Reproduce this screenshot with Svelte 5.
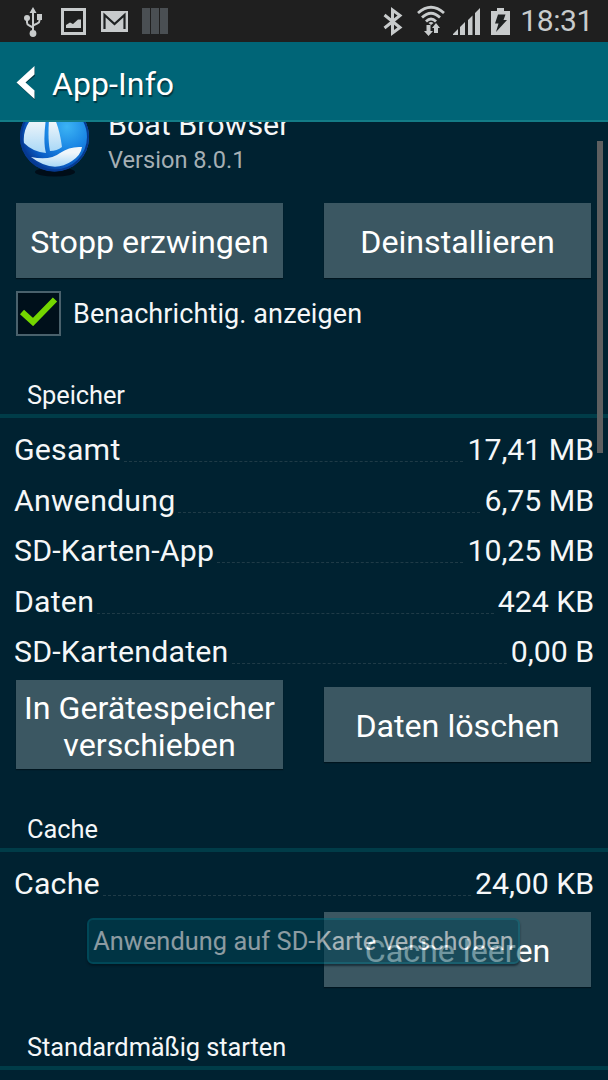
<script lang="ts">
	type Entry = { label: string; value: string };

	const storage: Entry[] = [
		{ label: 'Gesamt', value: '17,41 MB' },
		{ label: 'Anwendung', value: '6,75 MB' },
		{ label: 'SD-Karten-App', value: '10,25 MB' },
		{ label: 'Daten', value: '424 KB' },
		{ label: 'SD-Kartendaten', value: '0,00 B' }
	];
	const cache: Entry[] = [{ label: 'Cache', value: '24,00 KB' }];

	let notify = $state(true);
</script>

{#snippet rows(entries: Entry[])}
	<dl class="rows">
		{#each entries as entry}
			<div class="row">
				<dt>{entry.label}</dt>
				<span class="leader"></span>
				<dd>{entry.value}</dd>
			</div>
		{/each}
	</dl>
{/snippet}

<div class="phone">
	<div class="status">
		<div class="group left">
			<svg class="usb" width="20" height="31" viewBox="0 0 20 31">
				<path
					d="M10 6v19M4 13v3.5q0 2 2 2.8l4 2.2M16.5 11v3.5q0 2-2 2.8L10 19.5"
					fill="none"
					stroke="#c8cbcc"
					stroke-width="2"
				/>
				<path d="M10 1 13.500 7h-7zM14 8h5v6h-5z" fill="#c8cbcc" />
				<circle cx="4" cy="12" r="3" fill="#c8cbcc" />
				<circle cx="10" cy="27.5" r="3.4" fill="#c8cbcc" />
			</svg>
			<svg class="picture" width="25" height="27" viewBox="0 0 25 27">
				<path d="M1.5 1.5h22v24h-22z" fill="none" stroke="#c8cbcc" stroke-width="3" />
				<path d="M5 20v-3l4-2.5 3 1.5 5-4.500 3 0V20z" fill="#c8cbcc" />
			</svg>
			<svg class="mail" width="27" height="21" viewBox="0 0 27 21">
				<path d="M0 0h27v21H0z" fill="#c8cbcc" />
				<path d="M3.5 18V4l10 9 10-9v14" fill="none" stroke="#1e2122" stroke-width="2.2" />
			</svg>
			<svg width="26" height="26" viewBox="0 0 26 26">
				<path d="M0 0h8v26H0zM9 0h8v26H9zM18 0h8v26h-8z" fill="#4a4f53" />
			</svg>
		</div>
		<div class="group right">
			<svg class="bluetooth" width="20" height="29" viewBox="0 0 20 29">
				<path
					d="M1.500 8 17 20.500 9.500 26V3l7.500 5.500L1.500 21"
					fill="none"
					stroke="#c8cbcc"
					stroke-width="3"
				/>
			</svg>
			<svg class="wifi" width="28" height="31" viewBox="0 0 28 31">
				<g fill="none" stroke="#c8cbcc" stroke-width="2.8">
					<path d="M1 8Q14-3.500 27 8" />
					<path d="M5 12.500Q14 4 23 12.500" />
					<path d="M9 16.500Q14 11.500 19 16.500" />
				</g>
				<path d="M11.500 18q2.500-2 5 0l-2.500 2z" fill="#c8cbcc" />
				<path d="M9.500 20h4v6h2.500l-4.500 5L7 26h2.500zM17 28v-5h-2l4-5 4 5h-2v5z" fill="#c8cbcc" />
			</svg>
			<svg class="signal" width="27" height="27" viewBox="0 0 27 27">
				<path
					d="M0 27v-1l5-5v6zM7 27v-8l5-5v13zM15 27V12l4.500-4.500V27zM22 27V5l5-5v27z"
					fill="#c8cbcc"
				/>
			</svg>
			<svg class="battery" width="19" height="27" viewBox="0 0 19 27">
				<path d="M0 3h6V0h7v3h6v24H0z" fill="#c8cbcc" />
				<path d="M7 6.500h7.500L12.500 12H16L5 24l2.500-8.500H4z" fill="#1e2122" />
			</svg>
			<span class="clock">18:31</span>
		</div>
	</div>

	<header>
		<svg width="20" height="34" viewBox="0 0 20 34">
			<path d="M19 1v9l-9.500 7.500L19 26v8L1 17.500z" fill="#003642" />
			<path d="M18.500 0v8.500L9.500 16.500l9 8V33L.5 16.500z" fill="#fff" />
		</svg>
		<h1>App-Info</h1>
	</header>

	<main>
		<div class="app">
			<svg width="72" height="76" viewBox="0 0 72 76">
				<defs>
					<radialGradient id="globe" cx="68%" cy="35%" r="70%">
						<stop offset="0" stop-color="#3cb4f4" />
						<stop offset="0.45" stop-color="#1a86e4" />
						<stop offset="0.8" stop-color="#0a5cc4" />
						<stop offset="1" stop-color="#063a94" />
					</radialGradient>
					<linearGradient id="sail" x1="0" y1="0" x2="0" y2="1">
						<stop offset="0.3" stop-color="#f0f6fa" />
						<stop offset="1" stop-color="#a9d8f7" />
					</linearGradient>
				</defs>
				<ellipse cx="37" cy="71" rx="20" ry="4.500" fill="#000d18" />
				<circle cx="36.500" cy="36" r="34.500" fill="url(#globe)" />
				<circle cx="36.500" cy="36" r="33.500" fill="none" stroke="#063a92" stroke-width="2" />
				<path d="M30 5C15 12 4 26 6 42q9 9 22 10-4-14 2-47z" fill="url(#sail)" />
				<path d="M32 8q9 15 12 38-5 4-12 4-3-14 0-42z" fill="url(#sail)" />
				<path d="M13 56q19 4 29-4 10-7 22-6-1 8-10 14-19 13-41-4z" fill="url(#sail)" />
			</svg>
			<div class="about">
				<h2>Boat Browser</h2>
				<p>Version 8.0.1</p>
			</div>
		</div>

		<div class="actions top">
			<button>Stopp erzwingen</button>
			<button>Deinstallieren</button>
		</div>

		<label class="notify">
			<input type="checkbox" bind:checked={notify} />
			<span class="box">
				{#if notify}
					<svg width="39" height="29" viewBox="0 0 39 29">
						<path d="M3 15l11 10L36 2.500" fill="none" stroke="#74d600" stroke-width="6" />
					</svg>
				{/if}
			</span>
			Benachrichtig. anzeigen
		</label>

		<h3>Speicher</h3>
		{@render rows(storage)}
		<div class="actions tall">
			<button class="two-line">In Gerätespeicher verschieben</button>
			<button>Daten löschen</button>
		</div>

		<h3>Cache</h3>
		{@render rows(cache)}
		<div class="actions single">
			<button>Cache leeren</button>
		</div>

		<h3>Standardmäßig starten</h3>
	</main>

	<div class="scrollbar"></div>
	<div class="toast">Anwendung auf SD-Karte verschoben</div>
</div>

<style>
	:global(body) {
		background: #002231;
	}

	.phone {
		position: relative;
		display: flex;
		flex-direction: column;
		width: 608px;
		height: 1080px;
		overflow: hidden;
		background: #002231;
		color: #f5f7f8;
		font-family: Roboto, 'Noto Sans', sans-serif;
	}

	svg {
		display: block;
		flex: none;
	}

	h1,
	h2,
	h3,
	p,
	dl,
	dd {
		margin: 0;
		font-weight: 400;
	}

	.status {
		display: flex;
		justify-content: space-between;
		flex: none;
		height: 42px;
		padding: 0 15px 0 23px;
		background: #1f1f1f;
	}

	.group {
		display: flex;
		align-items: center;
	}

	.left {
		gap: 15px;
	}

	.usb {
		margin-right: 3px;
	}

	.left svg:last-child {
		margin-left: -1px;
	}

	.bluetooth {
		margin-right: 14px;
	}

	.wifi {
		margin: -2px 8px 0 0;
	}

	.signal {
		margin-right: 11px;
	}

	.battery {
		margin-right: 10px;
	}

	.clock {
		color: #c8cbcc;
		font-size: 30px;
		letter-spacing: -0.4px;
		line-height: 42px;
	}

	header {
		display: flex;
		align-items: center;
		flex: none;
		box-sizing: border-box;
		height: 80px;
		padding: 4px 16px 0;
		gap: 16px;
		background: #006577;
		border-bottom: 2px solid #137c87;
	}

	h1 {
		padding-top: 2px;
		color: #fff;
		font-size: 32px;
		letter-spacing: 0.1px;
		line-height: 40px;
		text-shadow: 1px 2px 1px #003642;
	}

	main {
		flex: 1;
		overflow: hidden;
	}

	.app {
		display: flex;
		gap: 18px;
		height: 81px;
		padding-left: 18px;
	}

	.app svg {
		margin-top: -21px;
	}

	.about {
		margin-top: -16px;
	}

	h2 {
		font-size: 30.400px;
		line-height: 38px;
	}

	.about p {
		color: #a5afb4;
		font-size: 23.6px;
		line-height: 30px;
		margin-top: 1px;
	}

	.actions {
		display: flex;
		align-items: center;
		justify-content: space-between;
		padding: 0 17px 0 16px;
	}

	button {
		box-sizing: border-box;
		width: 267px;
		height: 75px;
		padding: 4px 6px 0;
		border: 0;
		background: #3b5762;
		box-shadow: 0 1px 1px #00151f;
		color: #fff;
		font: inherit;
		font-size: 32.200px;
		line-height: 37px;
	}

	.notify {
		display: flex;
		align-items: center;
		gap: 12px;
		margin: 13px 0 0 16px;
		height: 45px;
		font-size: 27px;
		letter-spacing: 0.1px;
	}

	.notify input {
		position: absolute;
		opacity: 0;
	}

	.box {
		display: flex;
		align-items: center;
		justify-content: center;
		box-sizing: border-box;
		width: 45px;
		height: 45px;
		padding-bottom: 5px;
		border: 2px solid #4a616c;
		background: #00101b;
	}

	h3 {
		box-sizing: border-box;
		height: 82px;
		padding: 43px 27px 0;
		border-bottom: 4px solid #003c48;
		font-size: 25.400px;
		letter-spacing: -0.05px;
		line-height: 32px;
	}

	.rows {
		padding: 7px 14px 2.400px;
	}

	.row {
		display: flex;
		height: 50.600px;
		font-size: 30.300px;
		line-height: 49px;
	}

	dt {
		letter-spacing: 0.2px;
	}

	dd {
		letter-spacing: -0.050px;
	}

	.leader {
		flex: 1;
		height: 36px;
		margin: 0 4px 0 3px;
		border-bottom: 1px dashed #1f3b47;
	}

	.tall {
		padding-bottom: 0.6px;
	}

	.tall .two-line {
		height: 89px;
	}

	.single {
		justify-content: flex-end;
		padding-bottom: 0.6px;
	}

	.scrollbar {
		position: absolute;
		top: 141px;
		right: 5px;
		width: 6px;
		height: 312px;
		background: #5e5f60;
	}

	.toast {
		position: absolute;
		top: 918px;
		left: 87px;
		box-sizing: border-box;
		width: 433px;
		height: 46px;
		border: 2px solid #006778;
		border-radius: 6px;
		background: #004354;
		box-shadow: 0 2px 2px #00101b;
		color: #fff;
		font-size: 25.300px;
		letter-spacing: 0.08px;
		line-height: 44px;
		text-align: center;
		white-space: nowrap;
		opacity: 0.55;
	}
</style>
